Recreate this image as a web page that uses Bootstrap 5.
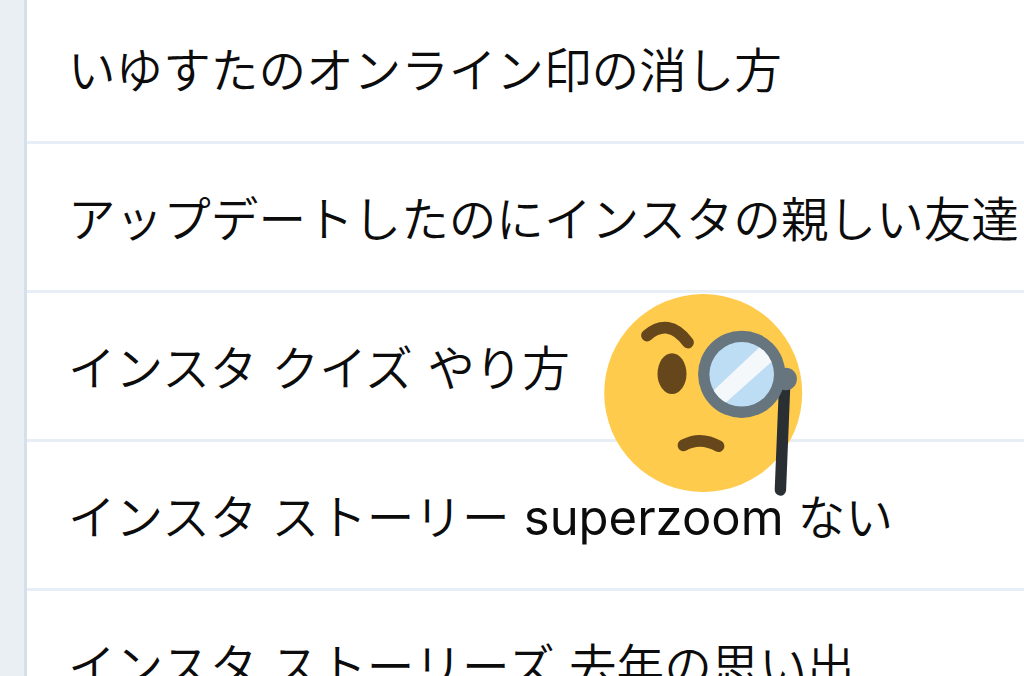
<!DOCTYPE html>
<html lang="ja">
<head>
    <meta charset="utf-8">
    <meta name="viewport" content="width=device-width, initial-scale=1">
    <title>検索候補</title>
    <link href="https://cdn.jsdelivr.net/npm/bootstrap@5.3.0/dist/css/bootstrap.min.css" rel="stylesheet">
    <style>
        body {
            background: #e9eff3;
            font-family: Inter, "Noto Sans CJK JP", sans-serif;
        }
        .side-strip {
            width: 24px;
        }
        .suggest-list {
            border-left: 3px solid #d6dfec;
            min-width: 0;
        }
        .suggest-item {
            height: 149px;
            padding: 5px 0 0 41px;
            border-bottom: 3px solid #e7eef5;
            font-size: 47.6px;
            font-weight: 350;
            line-height: 1;
            word-spacing: 0.8px;
            color: #0c0c0c;
            white-space: nowrap;
        }
        .suggest-item:first-child {
            height: 144px;
            padding-top: 0;
        }
        .latin-word {
            font-size: 49px;
            font-weight: 400;
        }
        /* emoji sticker lies over the rows */
        .sticker {
            left: 600px;
            top: 290px;
        }
    </style>
</head>
<body class="vh-100 overflow-hidden">
    <div class="d-flex vh-100 overflow-hidden position-relative">
        <div class="side-strip flex-shrink-0"></div>
        <div class="suggest-list flex-grow-1 bg-white overflow-hidden">
            <div class="suggest-item d-flex align-items-center"><span>いゆすたのオンライン印の消し方</span></div>
            <div class="suggest-item d-flex align-items-center"><span>アップデートしたのにインスタの親しい友達</span></div>
            <div class="suggest-item d-flex align-items-center"><span>インスタ クイズ やり方</span></div>
            <div class="suggest-item d-flex align-items-center"><span>インスタ ストーリー <span class="latin-word">superzoom</span> ない</span></div>
            <div class="suggest-item d-flex align-items-center"><span>インスタ ストーリーズ 去年の思い出</span></div>
        </div>
        <svg class="sticker position-absolute" width="210" height="210" viewBox="600 290 210 210" aria-hidden="true">
            <defs>
                <clipPath id="lens"><circle cx="741.7" cy="374.3" r="32.3"/></clipPath>
            </defs>
            <circle cx="703.2" cy="393" r="99" fill="#ffcb4c"/>
            <g fill="none" stroke="#65471b" stroke-width="11.8" stroke-linecap="round">
                <path d="M647 335.5C661 323.5 675 325 688 342.5"/>
                <path d="M683.5 445.3Q700.5 436 718.5 446.2"/>
            </g>
            <ellipse cx="672" cy="373.7" rx="14.5" ry="20.4" fill="#65471b"/>
            <!-- monocle -->
            <path d="M784.6 386L780.4 490" stroke="#292f33" stroke-width="11.4" stroke-linecap="round"/>
            <circle cx="785.7" cy="379" r="11.2" fill="#67757f"/>
            <circle cx="741.7" cy="374.3" r="43.6" fill="#67757f"/>
            <circle cx="741.7" cy="374.3" r="32.3" fill="#bdddf4"/>
            <path clip-path="url(#lens)" d="M706 397.7L766 341L782 352.5L717.5 410Z" fill="#f5f8fa"/>
        </svg>
    </div>
    <script src="https://cdn.jsdelivr.net/npm/bootstrap@5.3.0/dist/js/bootstrap.bundle.min.js"></script>
</body>
</html>
